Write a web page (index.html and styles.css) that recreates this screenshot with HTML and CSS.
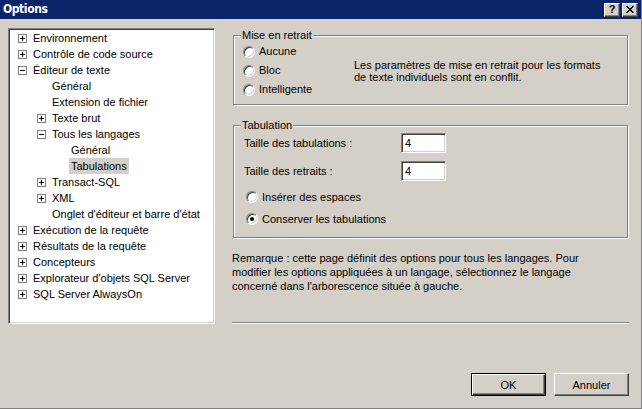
FILE: index.html
```html
<!DOCTYPE html>
<html lang="fr">
<head>
<meta charset="utf-8">
<title>Options</title>
<link rel="stylesheet" href="styles.css">
</head>
<body>
<div class="window">
  <div class="titlebar">
    <span class="title">Options</span>
    <div class="caption-btns">
      <span class="cap-btn help">?</span>
      <span class="cap-btn close"><svg width="8" height="7" viewBox="0 0 8 7" shape-rendering="crispEdges"><path d="M0 0h2v1h-2zM6 0h2v1h-2zM1 1h2v1h-2zM5 1h2v1h-2zM2 2h4v1h-4zM3 3h2v1h-2zM2 4h4v1h-4zM1 5h2v1h-2zM5 5h2v1h-2zM0 6h2v1h-2zM6 6h2v1h-2z" fill="#000"/></svg></span>
    </div>
  </div>

  <div class="main">
    <div class="tree">
      <div class="row l0"><svg class="exp" viewBox="0 0 9 9" shape-rendering="crispEdges"><rect x="0.5" y="0.5" width="8" height="8" fill="#fff" stroke="#808080"/><path d="M2 4.5h5M4.5 2v5" stroke="#000"/></svg><span class="label">Environnement</span></div>
      <div class="row l0"><svg class="exp" viewBox="0 0 9 9" shape-rendering="crispEdges"><rect x="0.5" y="0.5" width="8" height="8" fill="#fff" stroke="#808080"/><path d="M2 4.5h5M4.5 2v5" stroke="#000"/></svg><span class="label">Contrôle de code source</span></div>
      <div class="row l0"><svg class="exp" viewBox="0 0 9 9" shape-rendering="crispEdges"><rect x="0.5" y="0.5" width="8" height="8" fill="#fff" stroke="#808080"/><path d="M2 4.5h5" stroke="#000"/></svg><span class="label">Éditeur de texte</span></div>
      <div class="row l1"><span class="spacer"></span><span class="label">Général</span></div>
      <div class="row l1"><span class="spacer"></span><span class="label">Extension de fichier</span></div>
      <div class="row l1"><svg class="exp" viewBox="0 0 9 9" shape-rendering="crispEdges"><rect x="0.5" y="0.5" width="8" height="8" fill="#fff" stroke="#808080"/><path d="M2 4.5h5M4.5 2v5" stroke="#000"/></svg><span class="label">Texte brut</span></div>
      <div class="row l1"><svg class="exp" viewBox="0 0 9 9" shape-rendering="crispEdges"><rect x="0.5" y="0.5" width="8" height="8" fill="#fff" stroke="#808080"/><path d="M2 4.5h5" stroke="#000"/></svg><span class="label">Tous les langages</span></div>
      <div class="row l2"><span class="spacer"></span><span class="label">Général</span></div>
      <div class="row l2 sel"><span class="spacer"></span><span class="label">Tabulations</span></div>
      <div class="row l1"><svg class="exp" viewBox="0 0 9 9" shape-rendering="crispEdges"><rect x="0.5" y="0.5" width="8" height="8" fill="#fff" stroke="#808080"/><path d="M2 4.5h5M4.5 2v5" stroke="#000"/></svg><span class="label">Transact-SQL</span></div>
      <div class="row l1"><svg class="exp" viewBox="0 0 9 9" shape-rendering="crispEdges"><rect x="0.5" y="0.5" width="8" height="8" fill="#fff" stroke="#808080"/><path d="M2 4.5h5M4.5 2v5" stroke="#000"/></svg><span class="label">XML</span></div>
      <div class="row l1"><span class="spacer"></span><span class="label">Onglet d'éditeur et barre d'état</span></div>
      <div class="row l0"><svg class="exp" viewBox="0 0 9 9" shape-rendering="crispEdges"><rect x="0.5" y="0.5" width="8" height="8" fill="#fff" stroke="#808080"/><path d="M2 4.5h5M4.5 2v5" stroke="#000"/></svg><span class="label">Exécution de la requête</span></div>
      <div class="row l0"><svg class="exp" viewBox="0 0 9 9" shape-rendering="crispEdges"><rect x="0.5" y="0.5" width="8" height="8" fill="#fff" stroke="#808080"/><path d="M2 4.5h5M4.5 2v5" stroke="#000"/></svg><span class="label">Résultats de la requête</span></div>
      <div class="row l0"><svg class="exp" viewBox="0 0 9 9" shape-rendering="crispEdges"><rect x="0.5" y="0.5" width="8" height="8" fill="#fff" stroke="#808080"/><path d="M2 4.5h5M4.5 2v5" stroke="#000"/></svg><span class="label">Concepteurs</span></div>
      <div class="row l0"><svg class="exp" viewBox="0 0 9 9" shape-rendering="crispEdges"><rect x="0.5" y="0.5" width="8" height="8" fill="#fff" stroke="#808080"/><path d="M2 4.5h5M4.5 2v5" stroke="#000"/></svg><span class="label">Explorateur d'objets SQL Server</span></div>
      <div class="row l0"><svg class="exp" viewBox="0 0 9 9" shape-rendering="crispEdges"><rect x="0.5" y="0.5" width="8" height="8" fill="#fff" stroke="#808080"/><path d="M2 4.5h5M4.5 2v5" stroke="#000"/></svg><span class="label">SQL Server AlwaysOn</span></div>
    </div>

    <div class="pane">
      <fieldset class="group g1">
        <legend>Mise en retrait</legend>
        <div class="g1-body">
          <div class="radios">
            <div class="radio"><span class="rb"></span>Aucune</div>
            <div class="radio"><span class="rb"></span>Bloc</div>
            <div class="radio"><span class="rb"></span>Intelligente</div>
          </div>
          <p class="conflict">Les paramètres de mise en retrait pour les formats<br>de texte individuels sont en conflit.</p>
        </div>
      </fieldset>

      <fieldset class="group g2">
        <legend>Tabulation</legend>
        <div class="field"><span class="field-label">Taille des tabulations :</span><input class="num" type="text" value="4" readonly></div>
        <div class="field second"><span class="field-label">Taille des retraits :</span><input class="num" type="text" value="4" readonly></div>
        <div class="radio r2 first"><span class="rb"></span>Insérer des espaces</div>
        <div class="radio r2 tight"><span class="rb checked"></span>Conserver les tabulations</div>
      </fieldset>

      <p class="remark">Remarque : cette page définit des options pour tous les langages. Pour<br>modifier les options appliquées à un langage, sélectionnez le langage<br>concerné dans l'arborescence située à gauche.</p>

      <div class="separator"></div>
    </div>
  </div>

  <div class="footer">
    <button class="btn default">OK</button>
    <button class="btn">Annuler</button>
  </div>
</div>
</body>
</html>
```

FILE: styles.css
```css
html, body {
  margin: 0;
  padding: 0;
  background: #D4D0C8;
}

body {
  font-family: "Liberation Sans", Arial, sans-serif;
  font-size: 11px;
  color: #000;
}

.window {
  width: 642px;
  height: 409px;
  box-sizing: border-box;
  background: #D4D0C8;
  border-right: 1px solid #808080;
  border-bottom: 1px solid #808080;
  display: flex;
  flex-direction: column;
  overflow: hidden;
}

/* ---------- title bar ---------- */
.titlebar {
  flex: none;
  height: 19px;
  background: #0A246A;
  display: flex;
  align-items: center;
  justify-content: space-between;
  padding: 0 3px 0 3px;
}

.title {
  color: #fff;
  font-family: "Liberation Sans Narrow", "DejaVu Sans Condensed", "Liberation Sans", sans-serif;
  font-weight: bold;
  font-size: 12px;
  letter-spacing: -0.4px;
  line-height: 19px;
}

.caption-btns {
  display: flex;
  gap: 2px;
}

.cap-btn {
  width: 16px;
  height: 14px;
  box-sizing: border-box;
  background: #D4D0C8;
  border: 1px solid;
  border-color: #fff #404040 #404040 #fff;
  box-shadow: inset -1px -1px 0 #808080;
  display: flex;
  align-items: center;
  justify-content: center;
  font-weight: bold;
  font-size: 11px;
  line-height: 1;
  color: #000;
}

.cap-btn.close svg {
  display: block;
}

/* ---------- main area ---------- */
.main {
  flex: none;
  display: flex;
  padding: 9px 0 0 8px;
  height: 296px;
}

.tree {
  flex: none;
  width: 207px;
  height: 296px;
  box-sizing: border-box;
  background: #fff;
  border: 1px solid;
  border-color: #808080 #fff #fff #808080;
  box-shadow: inset 1px 1px 0 #404040, inset -1px -1px 0 #D4D0C8;
  padding-top: 1px;
}

.row {
  height: 16px;
  display: flex;
  align-items: center;
  white-space: nowrap;
}

.row.l0 { padding-left: 9px; }
.row.l1 { padding-left: 28px; }
.row.l2 { padding-left: 47px; }

.exp {
  flex: none;
  width: 9px;
  height: 9px;
  margin-right: 4px;
}

.spacer {
  flex: none;
  width: 13px;
}

.label {
  padding: 0 2px;
  line-height: 16px;
}

.sel .label {
  background: #D4D0C8;
}

/* ---------- right pane ---------- */
.pane {
  flex: none;
  width: 397px;
  margin-left: 17px;
  display: flex;
  flex-direction: column;
}

.group {
  margin: 0 0 0 1px;
  width: 395px;
  box-sizing: border-box;
  border: 1px solid #808080;
  box-shadow: 1px 1px 0 #fff, inset 1px 1px 0 #fff;
  min-width: 0;
}

.group legend {
  padding: 0 1px;
  line-height: 13px;
  background: #D4D0C8;
}

.g1 {
  margin-top: 1px;
  padding: 0 0 5px 9px;
}

.g1 legend {
  margin-left: -2px;
}

.g1-body {
  display: flex;
  align-items: center;
}

.radios {
  flex: none;
  width: 111px;
}

.radio {
  display: flex;
  align-items: center;
  height: 19px;
  line-height: 19px;
  white-space: nowrap;
}

.rb {
  flex: none;
  width: 12px;
  height: 12px;
  box-sizing: border-box;
  border-radius: 50%;
  background: #fff;
  border: 1px solid;
  border-color: #808080 #fff #fff #808080;
  box-shadow: inset 1px 1px 0 #404040, inset -1px -1px 0 #D4D0C8;
  margin-right: 4px;
  position: relative;
}

.rb.checked::after {
  content: "";
  position: absolute;
  left: 3px;
  top: 3px;
  width: 4px;
  height: 4px;
  border-radius: 50%;
  background: #000;
}

.conflict {
  margin: 0;
  line-height: 12px;
  white-space: nowrap;
}

.g2 {
  margin-top: 14px;
  padding: 0 0 8px 10px;
}

.g2 legend {
  margin-left: -3px;
}

.field {
  display: flex;
  align-items: center;
  height: 20px;
  margin-top: 1px;
}

.field.second {
  margin-top: 8px;
}

.field-label {
  flex: none;
  width: 157px;
  white-space: nowrap;
}

.num {
  width: 45px;
  height: 20px;
  box-sizing: border-box;
  margin: 0;
  padding: 0 0 0 3px;
  font-family: "Liberation Sans", Arial, sans-serif;
  font-size: 11px;
  color: #000;
  background: #fff;
  border: 1px solid;
  border-color: #808080 #fff #fff #808080;
  box-shadow: inset 1px 1px 0 #404040, inset -1px -1px 0 #D4D0C8;
  outline: none;
}

.radio.r2 {
  height: 20px;
  margin-left: 2px;
}

.radio.r2.first {
  margin-top: 6px;
}

.radio.r2.tight {
  margin-top: 2px;
}

.remark {
  margin: 13px 0 0 0;
  line-height: 14px;
  white-space: nowrap;
}

.separator {
  margin-top: auto;
  height: 0;
  border-top: 1px solid #808080;
  border-bottom: 1px solid #fff;
}

/* ---------- footer ---------- */
.footer {
  flex: 1;
  display: flex;
  justify-content: flex-end;
  align-items: flex-start;
  gap: 8px;
  padding: 49px 12px 0 0;
}

.btn {
  width: 75px;
  height: 23px;
  box-sizing: border-box;
  margin: 0;
  padding: 0;
  font-family: "Liberation Sans", Arial, sans-serif;
  font-size: 11px;
  color: #000;
  background: #D4D0C8;
  border: 1px solid;
  border-color: #fff #404040 #404040 #fff;
  box-shadow: inset -1px -1px 0 #808080;
}

.btn.default {
  border: 1px solid #000;
  box-shadow: inset 1px 1px 0 #fff, inset -1px -1px 0 #404040, inset -2px -2px 0 #808080;
}
```
